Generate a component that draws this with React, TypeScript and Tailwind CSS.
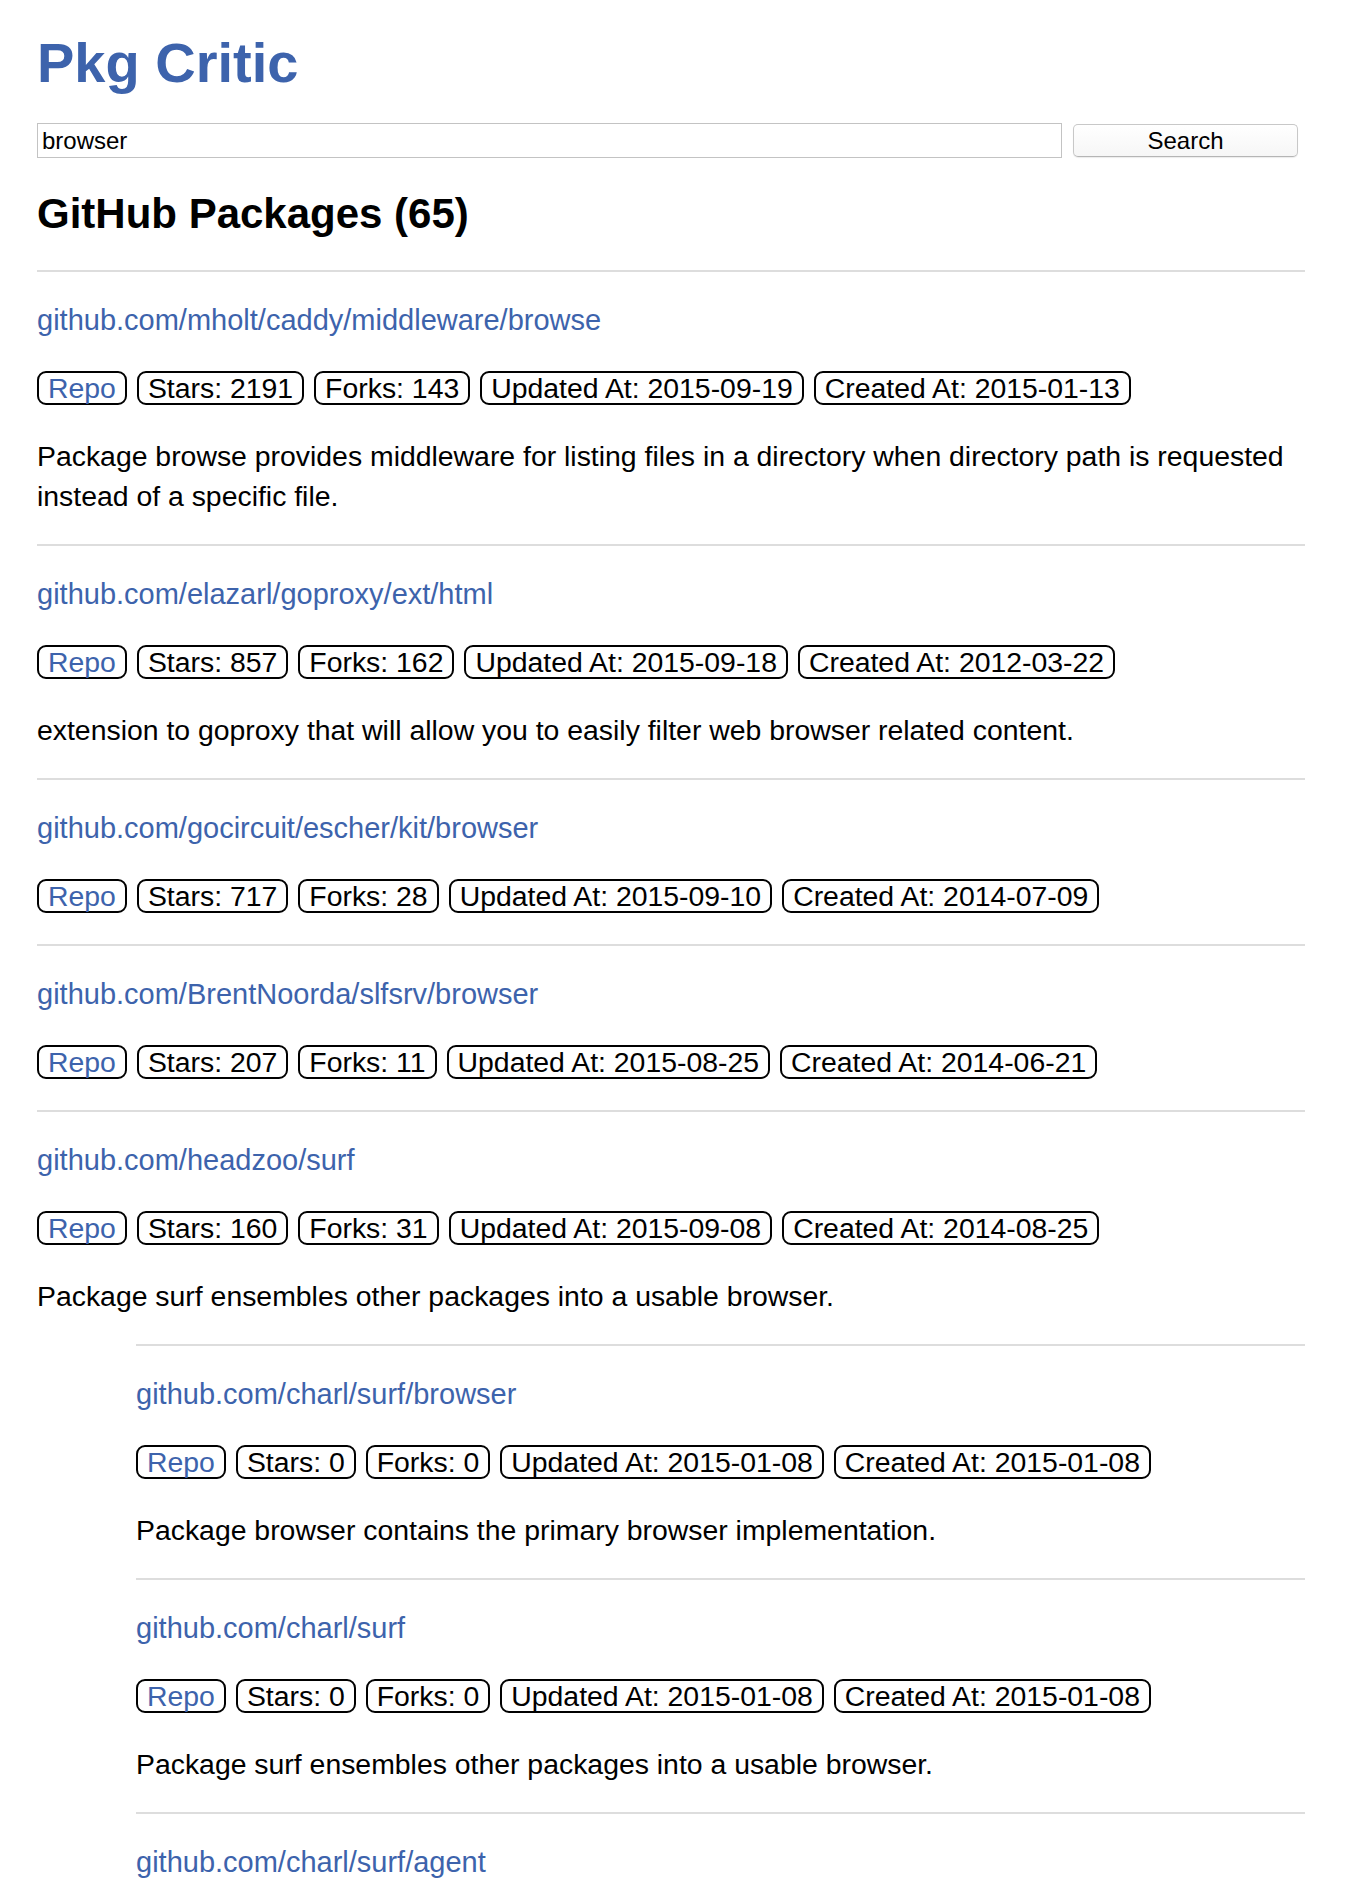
import { ReactNode } from "react";

interface Pkg {
  path: string;
  stars: number;
  forks: number;
  updated: string;
  created: string;
  desc?: string;
  children?: Pkg[];
}

const packages: Pkg[] = [
  {
    path: "github.com/mholt/caddy/middleware/browse",
    stars: 2191,
    forks: 143,
    updated: "2015-09-19",
    created: "2015-01-13",
    desc: "Package browse provides middleware for listing files in a directory when directory path is requested instead of a specific file.",
  },
  {
    path: "github.com/elazarl/goproxy/ext/html",
    stars: 857,
    forks: 162,
    updated: "2015-09-18",
    created: "2012-03-22",
    desc: "extension to goproxy that will allow you to easily filter web browser related content.",
  },
  {
    path: "github.com/gocircuit/escher/kit/browser",
    stars: 717,
    forks: 28,
    updated: "2015-09-10",
    created: "2014-07-09",
  },
  {
    path: "github.com/BrentNoorda/slfsrv/browser",
    stars: 207,
    forks: 11,
    updated: "2015-08-25",
    created: "2014-06-21",
  },
  {
    path: "github.com/headzoo/surf",
    stars: 160,
    forks: 31,
    updated: "2015-09-08",
    created: "2014-08-25",
    desc: "Package surf ensembles other packages into a usable browser.",
    children: [
      {
        path: "github.com/charl/surf/browser",
        stars: 0,
        forks: 0,
        updated: "2015-01-08",
        created: "2015-01-08",
        desc: "Package browser contains the primary browser implementation.",
      },
      {
        path: "github.com/charl/surf",
        stars: 0,
        forks: 0,
        updated: "2015-01-08",
        created: "2015-01-08",
        desc: "Package surf ensembles other packages into a usable browser.",
      },
      {
        path: "github.com/charl/surf/agent",
        stars: 0,
        forks: 0,
        updated: "2015-01-08",
        created: "2015-01-08",
        desc: "Package agent generates user agents strings for well known browsers and for custom browsers.",
      },
    ],
  },
];

function Badge({ children, blue }: { children: ReactNode; blue?: boolean }) {
  return (
    <span
      className={`border-2 border-black rounded-[9px] px-[9px] leading-[30px] ${
        blue ? "text-[#3d63ac]" : "text-black"
      }`}
    >
      {children}
    </span>
  );
}

function PackageItem({ pkg }: { pkg: Pkg }) {
  return (
    <div className="border-t-2 border-[#dddddd]">
      <div className="flex flex-col gap-[28px] py-[28px]">
        <div>
          <a href="#" className="text-[29px] text-[#3d63ac]">
            {pkg.path}
          </a>
        </div>
        <div className="flex flex-wrap items-center gap-[10px] h-[40px]">
          <Badge blue>Repo</Badge>
          <Badge>Stars: {pkg.stars}</Badge>
          <Badge>Forks: {pkg.forks}</Badge>
          <Badge>Updated At: {pkg.updated}</Badge>
          <Badge>Created At: {pkg.created}</Badge>
        </div>
        {pkg.desc && <p>{pkg.desc}</p>}
      </div>
      {pkg.children && (
        <div className="ml-[99px]">
          {pkg.children.map((c) => (
            <PackageItem key={c.path} pkg={c} />
          ))}
        </div>
      )}
    </div>
  );
}

export default function App() {
  return (
    <div className="h-[1892px] overflow-hidden bg-white font-['Liberation_Sans',Arial,sans-serif] text-black">
      <div className="pl-[37px] pr-[41px] pt-[31px]">
        <h1 className="text-[56px] leading-[64px] font-bold text-[#3d63ac]">Pkg Critic</h1>

        <div className="flex items-start gap-[11px] mt-[28px] pr-[7px]">
          <input
            className="flex-1 h-[35px] border border-[#c3c3c3] px-[4px] text-[24px] outline-none"
            defaultValue="browser"
          />
          <button className="w-[225px] h-[33px] mt-[1px] rounded-[5px] border border-[#c8c8c8] border-b-[#b5b5b5] bg-gradient-to-b from-white to-[#f6f6f6] shadow-[0_1px_1px_rgba(0,0,0,0.08)] text-[24px] leading-[30px]">
            Search
          </button>
        </div>

        <h2 className="text-[42px] leading-[48px] font-bold mt-[32px] mb-[32px]">
          GitHub Packages (65)
        </h2>

        <div className="text-[28.4px] leading-[40px]">
          {packages.map((p) => (
            <PackageItem key={p.path} pkg={p} />
          ))}
        </div>
      </div>
    </div>
  );
}
